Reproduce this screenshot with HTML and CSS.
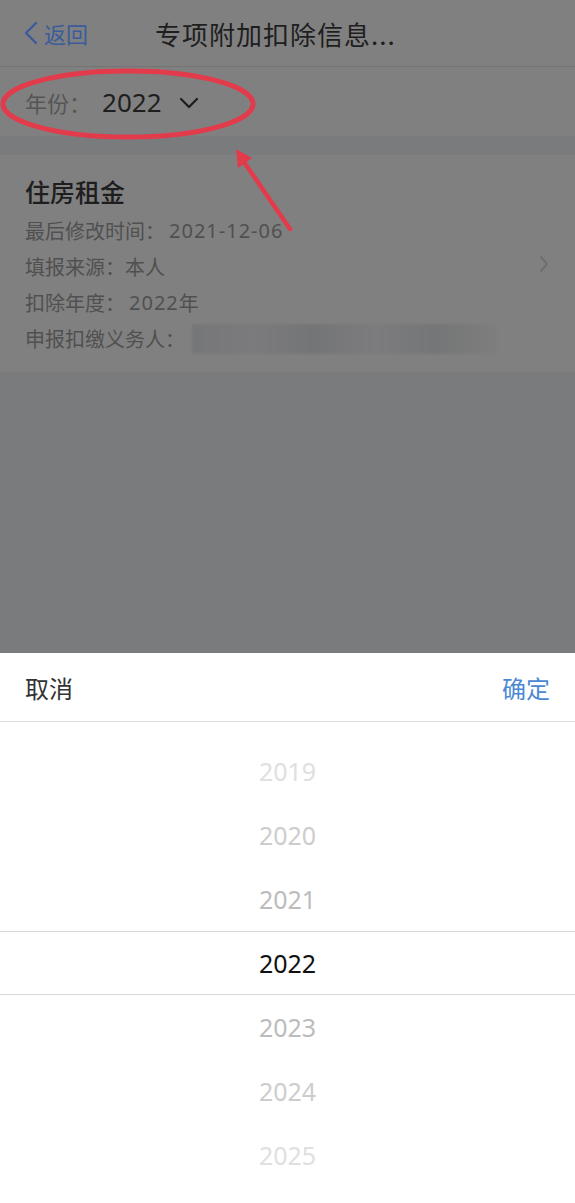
FILE: index.html
```html
<!DOCTYPE html>
<html lang="zh-CN">
<head>
<meta charset="utf-8">
<title>专项附加扣除信息</title>
<link rel="stylesheet" href="styles.css">
</head>
<body>
<div class="screen">
  <div class="dimmed">
    <header class="nav">
      <div class="back">
        <svg class="back-icon" width="14" height="24" viewBox="0 0 14 24"><path d="M12 2 L2 12 L12 22" fill="none" stroke="#3b5b9c" stroke-width="2.4" stroke-linecap="round" stroke-linejoin="round"/></svg>
        <span>返回</span>
      </div>
      <div class="title">专项附加扣除信息...</div>
    </header>
    <div class="year-row">
      <span class="year-label">年份：</span>
      <span class="year-value">2022</span>
      <svg class="year-caret" width="20" height="12" viewBox="0 0 20 12"><path d="M2 2 L10 10 L18 2" fill="none" stroke="#1c1c1c" stroke-width="2.2" stroke-linecap="round" stroke-linejoin="round"/></svg>
    </div>
    <div class="gap"></div>
    <section class="card">
      <div class="card-body">
        <h2 class="card-title">住房租金</h2>
        <p class="line">最后修改时间：<span class="num">2021-12-06</span></p>
        <p class="line">填报来源：本人</p>
        <p class="line">扣除年度：<span class="num">2022</span>年</p>
        <p class="line">申报扣缴义务人：<span class="blur"></span></p>
      </div>
      <svg class="card-arrow" width="10" height="18" viewBox="0 0 10 18"><path d="M2 2 L8 9 L2 16" fill="none" stroke="#6a6a6a" stroke-width="1.8" stroke-linecap="round" stroke-linejoin="round"/></svg>
    </section>
    <div class="rest"></div>
  </div>
  <div class="sheet">
    <div class="sheet-head">
      <span class="cancel">取消</span>
      <span class="ok">确定</span>
    </div>
    <div class="picker">
      <div class="opt o3">2019</div>
      <div class="opt o2">2020</div>
      <div class="opt o1">2021</div>
      <div class="opt sel">2022</div>
      <div class="opt o1">2023</div>
      <div class="opt o2">2024</div>
      <div class="opt o3">2025</div>
    </div>
  </div>
  <svg class="annot" width="575" height="260" viewBox="0 0 575 260">
    <ellipse cx="128" cy="104" rx="125" ry="33" fill="none" stroke="#e23b4c" stroke-width="5"/>
    <line x1="290" y1="229" x2="244" y2="162" stroke="#e23b4c" stroke-width="4.5" stroke-linecap="round"/>
    <polygon points="236,149 252,158 238,168" fill="#e23b4c"/>
  </svg>
</div>
</body>
</html>
```
FILE: styles.css
```css
* { box-sizing: border-box; }
html, body { margin: 0; padding: 0; }
body {
  width: 575px;
  height: 1203px;
  overflow: hidden;
  font-family: "Noto Sans CJK SC", "Noto Sans", sans-serif;
  background: #fff;
}
.screen {
  position: relative;
  width: 575px;
  height: 1203px;
  display: flex;
  flex-direction: column;
}
.dimmed {
  flex: 1;
  display: flex;
  flex-direction: column;
  background: #7a7b7d;
}
.nav {
  height: 67px;
  background: #808080;
  border-bottom: 1px solid #747474;
  display: flex;
  align-items: center;
  padding-left: 24px;
}
.back {
  display: flex;
  align-items: center;
  color: #3b5b9c;
  font-size: 22px;
  width: 131px;
}
.back-icon { margin-right: 6px; }
.title {
  color: #1e1e1e;
  font-size: 26px;
  letter-spacing: 1px;
}
.year-row {
  height: 69px;
  background: #808080;
  display: flex;
  align-items: center;
  padding-left: 25px;
}
.year-label { color: #555; font-size: 22px; }
.year-value {
  color: #1e1e1e;
  font-size: 26px;
  font-family: "Noto Sans", "Noto Sans CJK SC", sans-serif;
  margin-left: 11px;
}
.year-caret { margin-left: 17px; margin-top: 2px; }
.gap { height: 19px; }
.card {
  height: 217px;
  background: #808080;
  display: flex;
  align-items: center;
  padding: 0 26px 0 25px;
}
.card-body { flex: 1; padding-top: 4px; }
.card-title {
  margin: 0 0 6px;
  font-size: 25px;
  font-weight: 500;
  color: #1e1e1e;
  line-height: 32px;
}
.line {
  margin: 0;
  font-size: 20px;
  color: #505050;
  line-height: 36px;
  display: flex;
  align-items: center;
}
.num {
  font-family: "Noto Sans", "Noto Sans CJK SC", sans-serif;
  font-size: 20px;
  letter-spacing: 1px;
  margin-left: 4px;
}
.blur {
  display: inline-block;
  width: 305px;
  height: 30px;
  margin-left: 7px;
  background: linear-gradient(90deg, #767778 0%, #7b7b7d 20%, #747577 40%, #7c7c7e 60%, #757677 80%, #7e7e7e 100%);
  filter: blur(1px);
}
.card-arrow { margin-top: 0; }
.rest { flex: 1; }
.sheet {
  height: 550px;
  background: #fff;
  display: flex;
  flex-direction: column;
}
.sheet-head {
  height: 69px;
  border-bottom: 1px solid #dedede;
  display: flex;
  align-items: center;
  justify-content: space-between;
  padding: 0 25px;
  font-size: 24px;
}
.cancel { color: #333; }
.ok { color: #4a88d6; }
.picker { padding-top: 17px; display: flex; flex-direction: column; }
.opt {
  height: 64px;
  display: flex;
  align-items: center;
  justify-content: center;
  font-size: 25px;
  font-family: "Noto Sans", "Noto Sans CJK SC", sans-serif;
}
.o3 { color: #e0e0e0; }
.o2 { color: #cdcdcd; }
.o1 { color: #bcbcbc; }
.sel {
  color: #111;
  border-top: 1px solid #d8d8d8;
  border-bottom: 1px solid #d8d8d8;
}
.annot {
  position: absolute;
  left: 0;
  top: 0;
  pointer-events: none;
}
```
